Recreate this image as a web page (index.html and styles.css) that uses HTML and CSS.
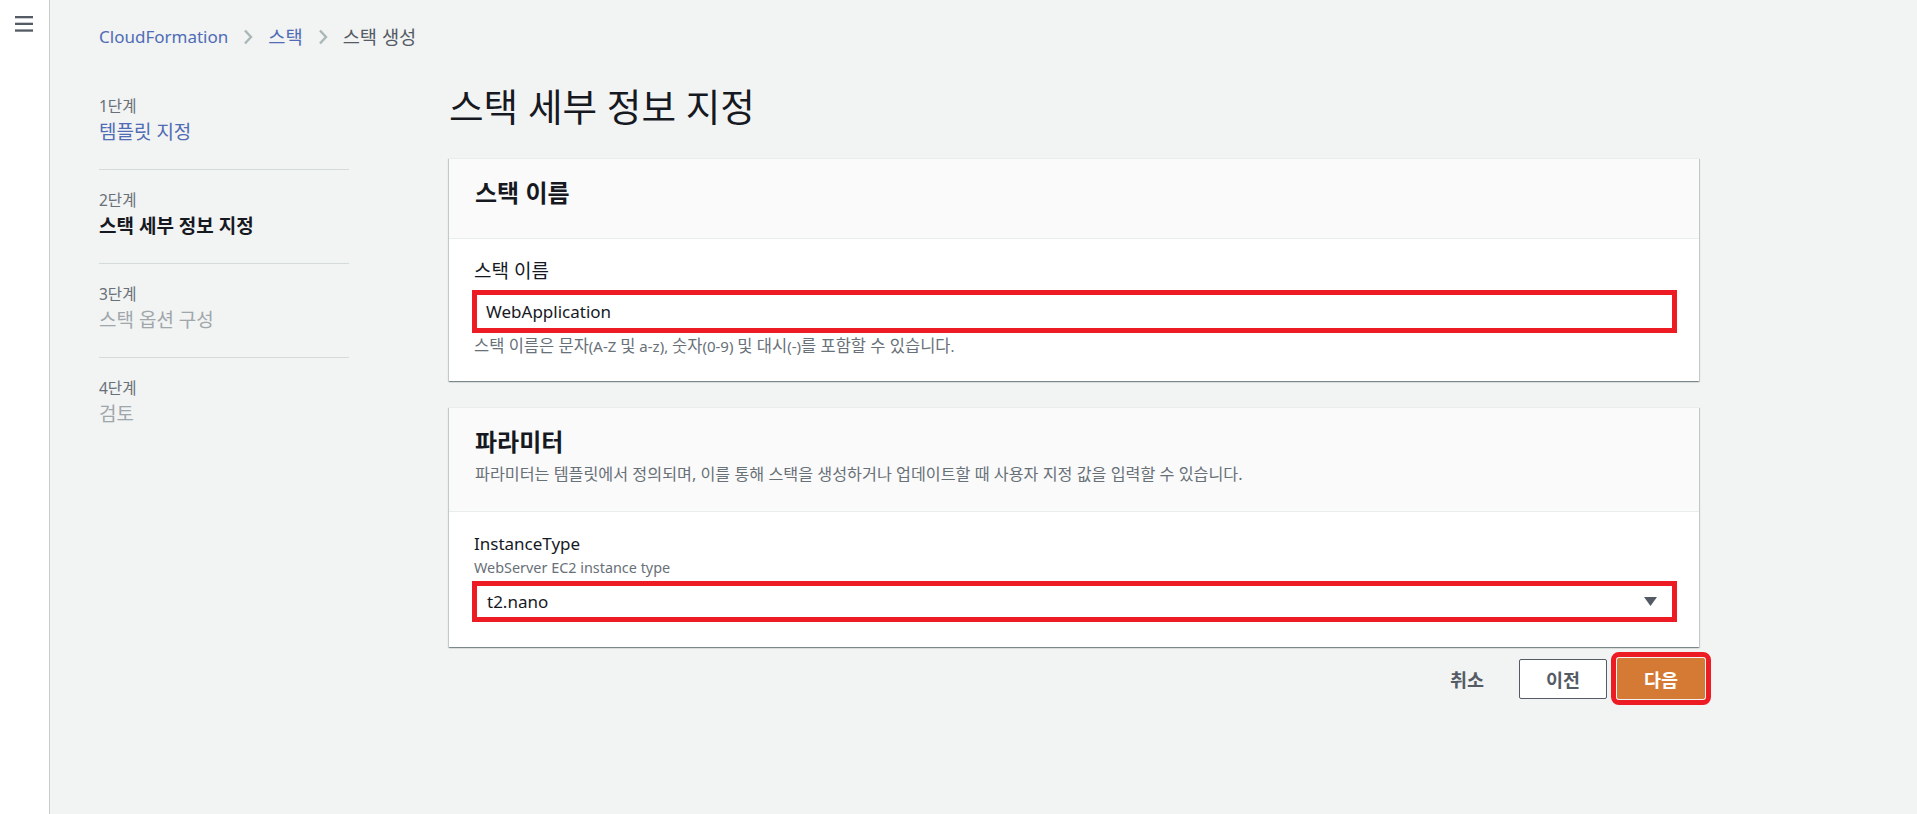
FILE: index.html
```html
<!DOCTYPE html>
<html lang="ko">
<head>
<meta charset="utf-8">
<title>스택 세부 정보 지정</title>
<link rel="stylesheet" href="styles.css">
</head>
<body>
<div class="app">
  <aside class="rail">
    <button class="menu" type="button" aria-label="메뉴">
      <svg width="18" height="16" viewBox="0 0 18 16"><rect x="0" y="0" width="18" height="2.3" fill="#545b64"/><rect x="0" y="6.7" width="18" height="2.3" fill="#545b64"/><rect x="0" y="13.4" width="18" height="2.3" fill="#545b64"/></svg>
    </button>
  </aside>
  <main class="main">
    <nav class="crumbs">
      <a class="crumb link">CloudFormation</a>
      <svg class="chev" width="10" height="16" viewBox="0 0 10 16"><path d="M2 1.5 L8 8 L2 14.5" fill="none" stroke="#aab7b8" stroke-width="2.4"/></svg>
      <a class="crumb link ko">스택</a>
      <svg class="chev" width="10" height="16" viewBox="0 0 10 16"><path d="M2 1.5 L8 8 L2 14.5" fill="none" stroke="#aab7b8" stroke-width="2.4"/></svg>
      <span class="crumb current ko">스택 생성</span>
    </nav>
    <div class="layout">
      <ol class="steps">
        <li class="step"><span class="step-num">1단계</span><a class="step-name done">템플릿 지정</a></li>
        <li class="step"><span class="step-num">2단계</span><span class="step-name active">스택 세부 정보 지정</span></li>
        <li class="step"><span class="step-num">3단계</span><span class="step-name todo">스택 옵션 구성</span></li>
        <li class="step"><span class="step-num">4단계</span><span class="step-name todo">검토</span></li>
      </ol>
      <div class="form">
        <h1 class="title">스택 세부 정보 지정</h1>
        <section class="card">
          <header class="card-head"><h2 class="card-title">스택 이름</h2></header>
          <div class="card-body">
            <div class="field-label field-label-ko">스택 이름</div>
            <div class="input">WebApplication</div>
            <p class="hint"><span class="ko">스택 이름은 문자</span>(A-Z <span class="ko">및</span> a-z), <span class="ko">숫자</span>(0-9) <span class="ko">및 대시</span>(-)<span class="ko">를 포함할 수 있습니다</span>.</p>
          </div>
        </section>
        <section class="card card-params">
          <header class="card-head"><h2 class="card-title">파라미터</h2><p class="card-desc">파라미터는 템플릿에서 정의되며, 이를 통해 스택을 생성하거나 업데이트할 때 사용자 지정 값을 입력할 수 있습니다.</p></header>
          <div class="card-body">
            <div class="field-label">InstanceType</div>
            <div class="field-desc">WebServer EC2 instance type</div>
            <div class="select"><span>t2.nano</span><svg width="13" height="9" viewBox="0 0 13 9"><polygon points="0,0 13,0 6.5,9" fill="#545b64"/></svg></div>
          </div>
        </section>
        <div class="actions">
          <button class="btn btn-cancel" type="button">취소</button>
          <button class="btn btn-prev" type="button">이전</button>
          <button class="btn btn-next" type="button">다음</button>
        </div>
      </div>
    </div>
  </main>
</div>
</body>
</html>
```
FILE: styles.css
```css
html, body {
  margin: 0;
  padding: 0;
}
body {
  background: #f2f3f3;
  font-family: "Noto Sans", "Noto Sans CJK KR", sans-serif;
  color: #16191f;
}
.ko {
  font-size: 1.1em;
}
.app {
  display: flex;
  min-height: 100vh;
}
.rail {
  flex: none;
  width: 49px;
  background: #fff;
  border-right: 1px solid #c9cccf;
}
.menu {
  display: block;
  margin: 16px 0 0 15px;
  padding: 0;
  border: 0;
  background: none;
  width: 18px;
  height: 16px;
  line-height: 0;
}
.main {
  flex: 1;
  padding: 25px 0 0 49px;
}
.crumbs {
  display: flex;
  align-items: center;
  height: 24px;
  font-size: 17px;
  line-height: 24px;
}
.chev {
  margin: 0 15px;
  flex: none;
}
.link {
  color: #4f6cb5;
}
.current {
  color: #545b64;
}
.layout {
  display: flex;
  gap: 100px;
  margin-top: 37px;
}
.steps {
  flex: none;
  width: 250px;
  list-style: none;
  margin: 0;
  padding: 0;
}
.step {
  display: flex;
  flex-direction: column;
  padding: 20px 0 24px;
}
.step:first-child {
  padding-top: 10px;
}
.step + .step {
  border-top: 1px solid #d5dbdb;
}
.step-num {
  font-size: 15.5px;
  line-height: 20px;
  color: #687078;
}
.step-name {
  margin-top: 3px;
  font-size: 19px;
  line-height: 26px;
}
.step-name.done {
  color: #4f6cb5;
}
.step-name.active {
  font-weight: 700;
  color: #16191f;
}
.step-name.todo {
  color: #a0a7ab;
}
.form {
  flex: none;
  width: 1250px;
}
.title {
  margin: 0;
  font-size: 37.6px;
  font-weight: 400;
  line-height: 42px;
  color: #16191f;
}
.card {
  margin-top: 30px;
  background: #fff;
  box-shadow: 0 1px 1px 0 rgba(0, 28, 36, 0.3), 1px 1px 1px 0 rgba(0, 28, 36, 0.15), -1px 1px 1px 0 rgba(0, 28, 36, 0.15);
  border-top: 1px solid #eaeded;
}
.card + .card {
  margin-top: 26px;
}
.card-head {
  background: #fafafa;
  padding: 19px 26px 30px;
  border-bottom: 1px solid #eaeded;
}
.card-params .card-head {
  padding-bottom: 26px;
}
.card-title {
  margin: 0;
  font-size: 24px;
  font-weight: 700;
  line-height: 30px;
}
.card-desc {
  margin: 6px 0 0;
  font-size: 16.2px;
  line-height: 22px;
  color: #687078;
}
.card-body {
  padding: 21px 22px 25px 23px;
}
.field-label {
  margin-left: 2px;
  font-size: 17px;
  line-height: 22px;
  color: #16191f;
}
.field-label-ko {
  font-size: 19px;
}
.field-desc {
  margin: 3px 0 0 2px;
  font-size: 14.4px;
  line-height: 20px;
  color: #687078;
}
.input {
  box-sizing: border-box;
  margin-top: 8px;
  height: 43px;
  padding: 0 9px;
  border: 5px solid #ed1c24;
  background: #fff;
  font-size: 17px;
  line-height: 33px;
  color: #16191f;
}
.hint {
  margin: 3px 0 0 2px;
  font-size: 15px;
  line-height: 20px;
  color: #687078;
}
.select {
  box-sizing: border-box;
  display: flex;
  align-items: center;
  justify-content: space-between;
  margin-top: 3px;
  height: 41px;
  padding: 0 15px 0 10px;
  border: 5px solid #ed1c24;
  background: #fff;
  font-size: 17px;
  color: #16191f;
}
.actions {
  display: flex;
  justify-content: flex-end;
  align-items: center;
  gap: 10px;
  margin: 11px -6px 0 0;
}
.btn {
  box-sizing: border-box;
  font-family: inherit;
  font-size: 18.5px;
  font-weight: 700;
  cursor: pointer;
}
.btn-cancel {
  height: 40px;
  padding: 0 25px;
  border: 0;
  background: none;
  color: #545b64;
}
.btn-prev {
  width: 88px;
  height: 40px;
  border: 1px solid #545b64;
  border-radius: 2px;
  background: #fff;
  color: #545b64;
}
.btn-next {
  width: 88px;
  height: 41px;
  border: 1px solid #d57a34;
  border-radius: 2px;
  background: #d57a34;
  color: #fff;
  outline: 5px solid #ed1c24;
  outline-offset: 1px;
}
```
